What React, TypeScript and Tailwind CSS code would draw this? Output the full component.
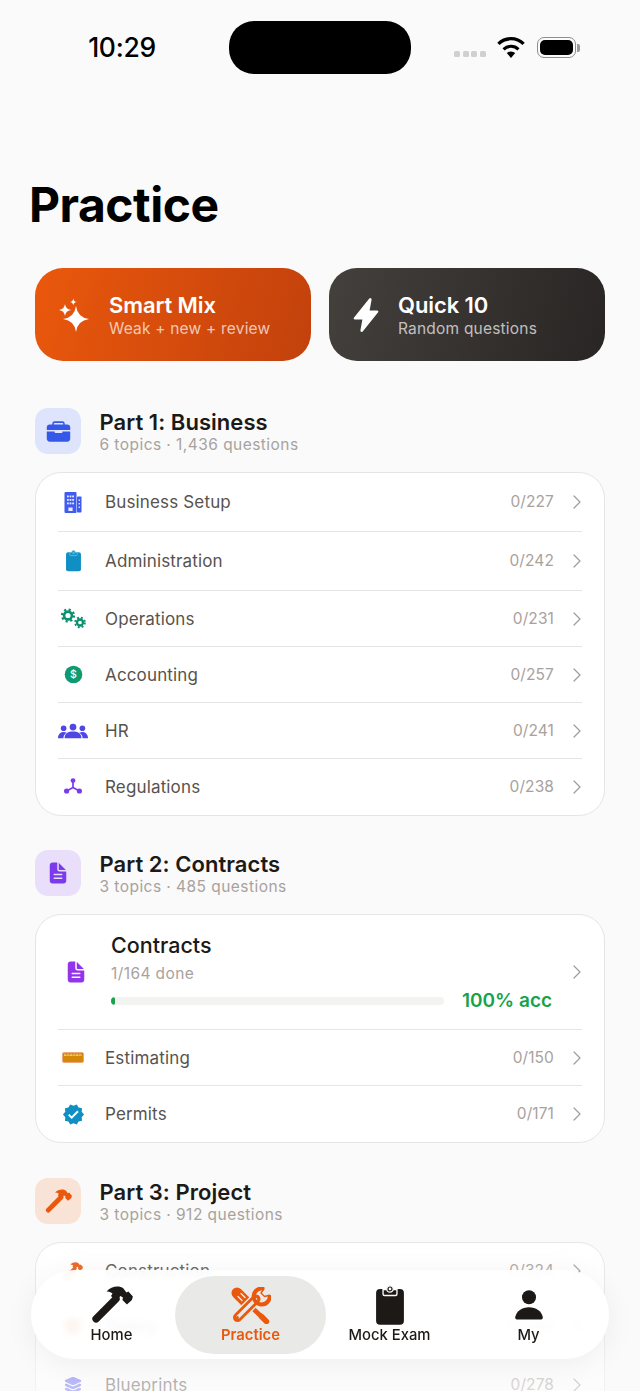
import type { ReactNode } from "react";
import { ChevronRight } from "lucide-react";
import { IoFlash, IoBriefcase, IoDocumentText, IoLayers, IoShield } from "react-icons/io5";
import { MdVerified } from "react-icons/md";

function Hammer({ size, color }: { size: number; color: string }) {
  return (
    <svg width={size} height={size * 0.9} viewBox="0 0 42 38" fill={color}>
      <path d="M5 33L25 13" stroke={color} strokeWidth="7.5" strokeLinecap="round" />
      <path d="M15.5 5.5C20 0.5 28 -1 32.5 2.5L35.5 6.5L37.5 5.5L42 10.5L41 14L36 18.5L31.5 14L32 11.5L29.5 10L25 15L20 10L21.5 7.5C19.5 6 17.5 5.5 15.5 5.5Z" />
    </svg>
  );
}

function Clipboard({ width, color, clip }: { width: number; color: string; clip: string }) {
  return (
    <svg width={width} height={width * 1.42} viewBox="0 0 28 40">
      <rect x="0" y="4" width="28" height="36" rx="4" fill={color} />
      <path d="M7 4.5h14V9a1.5 1.5 0 0 1-1.5 1.5h-11A1.5 1.5 0 0 1 7 9z" fill={color} stroke={clip} strokeWidth="1.4" />
      <circle cx="14" cy="4" r="3.2" fill={color} stroke={clip} strokeWidth="1.2" />
      <circle cx="14" cy="4" r="1.4" fill={clip} />
    </svg>
  );
}

function Building() {
  return (
    <svg width="18" height="21" viewBox="0 0 18 21">
      <rect x="0.5" y="0" width="12" height="21" rx="1" fill="#3f5bf0" />
      <rect x="13" y="4.5" width="4.5" height="16" rx="0.8" fill="#3f5bf0" />
      <g fill="#e6eaff">
        <rect x="3" y="3.5" width="1.8" height="1.8" />
        <rect x="5.6" y="3.5" width="1.8" height="1.8" />
        <rect x="8.2" y="3.5" width="1.8" height="1.8" />
        <rect x="3" y="7" width="1.8" height="1.8" />
        <rect x="5.6" y="7" width="1.8" height="1.8" />
        <rect x="8.2" y="7" width="1.8" height="1.8" />
        <rect x="3" y="10.5" width="1.8" height="1.8" />
        <rect x="5.6" y="10.5" width="1.8" height="1.8" />
        <rect x="8.2" y="10.5" width="1.8" height="1.8" />
        <rect x="4.4" y="15.5" width="4.2" height="3.5" />
        <rect x="14.6" y="7.5" width="1.4" height="1.4" />
        <rect x="14.6" y="11" width="1.4" height="1.4" />
        <rect x="14.6" y="14.5" width="1.4" height="1.4" />
      </g>
    </svg>
  );
}

const gearsIcon = (
  <svg width="25" height="21" viewBox="0 0 25 21" fill="none" stroke="#0b8f6f">
    <circle cx="7" cy="7.5" r="3.9" strokeWidth="2.6" />
    <circle cx="7" cy="7.5" r="6" strokeWidth="2.2" strokeDasharray="2.2 2.5" />
    <circle cx="19" cy="14.5" r="3" strokeWidth="2.3" />
    <circle cx="19" cy="14.5" r="4.9" strokeWidth="1.9" strokeDasharray="1.9 2" />
  </svg>
);

const dollarIcon = (
  <svg width="19" height="19" viewBox="0 0 19 19">
    <circle cx="9.5" cy="9.5" r="8.8" fill="#0f9a72" />
    <text x="9.5" y="13.3" textAnchor="middle" fontSize="10.5" fontWeight="500" fill="#fff" fontFamily="Inter, sans-serif">
      $
    </text>
  </svg>
);

const groupIcon = (
  <svg width="32" height="16" viewBox="0 0 32 16" fill="#4f46e5">
    <circle cx="6" cy="5" r="3" />
    <circle cx="16" cy="3.8" r="3.6" />
    <circle cx="26" cy="5" r="3" />
    <path d="M7 15.8C7 10.5 11 8.6 16 8.6S25 10.5 25 15.8Z" />
    <path d="M0 15.8C0 11 3 9 6.5 9L9.5 9.8C7 11.2 5.8 13 5.8 15.8Z" />
    <path d="M32 15.8C32 11 29 9 25.5 9L22.5 9.8C25 11.2 26.2 13 26.2 15.8Z" />
  </svg>
);

const networkIcon = (
  <svg width="20" height="20" viewBox="0 0 20 20" fill="#7c3aed">
    <path d="M10 4v6.5M10 10.5l-6 3.2M10 10.5l6 3.2" stroke="#7c3aed" strokeWidth="1.7" fill="none" />
    <circle cx="10" cy="3.6" r="2.4" />
    <circle cx="3.6" cy="14" r="2.6" />
    <circle cx="16.4" cy="14" r="2.6" />
  </svg>
);

const rulerIcon = (
  <svg width="22" height="11" viewBox="0 0 22 11">
    <rect x="0.5" y="0.5" width="21" height="10" rx="1.5" fill="#d48806" stroke="#eda77c" />
    <path d="M3 1.5v2.5M6 1.5v1.6M9 1.5v2.5M12 1.5v1.6M15 1.5v2.5M18 1.5v1.6" stroke="#fde3c4" strokeWidth="0.8" />
    <path d="M2 3.4h18" stroke="#fde3c4" strokeWidth="0.5" />
  </svg>
);

const sparkles = (
  <svg width="32" height="37" viewBox="0 0 32 37" fill="#fff">
    <path d="M18 10Q19.5 21.5 31 23Q19.5 24.5 18 36Q16.5 24.5 5 23Q16.5 21.5 18 10Z" />
    <path d="M7 8Q7.7 13.3 13 14Q7.7 14.7 7 20Q6.3 14.7 1 14Q6.3 13.3 7 8Z" />
    <path d="M15.3 2.5Q15.7 5.6 18.8 6Q15.7 6.4 15.3 9.5Q14.9 6.4 11.8 6Q14.9 5.6 15.3 2.5Z" />
  </svg>
);

const toolsIcon = (
  <svg width="40" height="37" viewBox="0 0 40 37" fill="none" strokeLinecap="round">
    <path d="M6 6L15 15" stroke="#ea580c" strokeWidth="11" />
    <path d="M7 9.5L11 13.5M10 6.5L14 10.5" stroke="#e9e9e8" strokeWidth="1.4" />
    <path d="M15 15L33 32" stroke="#ea580c" strokeWidth="4.5" strokeLinecap="butt" />
    <path d="M30.5 29.5L35.5 34.5" stroke="#ea580c" strokeWidth="5.5" />
    <path d="M6.5 30.5L25 12" stroke="#e9e9e8" strokeWidth="12" />
    <path d="M6.5 30.5L25 12" stroke="#ea580c" strokeWidth="9" />
    <path d="M7 30L24.5 12.5" stroke="#e9e9e8" strokeWidth="3.6" />
    <circle cx="6.5" cy="30.5" r="1.5" fill="#ea580c" />
    <path d="M33 1.8A8 8 0 1 0 38.6 8.2" stroke="#ea580c" strokeWidth="4" strokeLinecap="butt" />
    <path d="M33 1.8L30 6L33.5 9.5L38.6 8.2" stroke="#ea580c" strokeWidth="1.4" />
  </svg>
);

const personIcon = (
  <svg width="28" height="30" viewBox="0 0 28 30" fill="#1c1917">
    <circle cx="14" cy="7.2" r="7" />
    <path d="M0.2 27C1.5 21 7 17.2 14 17.2S26.5 21 27.8 27C28.1 28.5 27 29.5 25.5 29.5H2.5C1 29.5 -0.1 28.5 0.2 27Z" />
  </svg>
);

type Row = { icon: ReactNode; label: string; count: string };

const business: Row[] = [
  { icon: <Building />, label: "Business Setup", count: "0/227" },
  { icon: <Clipboard width={15} color="#0f8fc4" clip="#7cc3df" />, label: "Administration", count: "0/242" },
  { icon: gearsIcon, label: "Operations", count: "0/231" },
  { icon: dollarIcon, label: "Accounting", count: "0/257" },
  { icon: groupIcon, label: "HR", count: "0/241" },
  { icon: networkIcon, label: "Regulations", count: "0/238" },
];

function TopicRow({ row, last, height }: { row: Row; last?: boolean; height: string }) {
  return (
    <div className={`mx-[22px] flex items-center ${height} ${last ? "" : "border-b border-[#e7e5e4]"}`}>
      <div className="flex w-[30px] shrink-0 justify-center">{row.icon}</div>
      <span className="mt-[2px] ml-[17px] flex-1 text-[17px] tracking-[0.15px] text-[#57534e]">{row.label}</span>
      <span className="text-[15.5px] tracking-[0.1px] text-[#a8a29e]">{row.count}</span>
      <ChevronRight size={24} strokeWidth={1.2} className="mr-[-7px] ml-[11px] text-[#a09b96]" />
    </div>
  );
}

function SectionHead({ tint, icon, title, sub }: { tint: string; icon: ReactNode; title: string; sub: string }) {
  return (
    <div className="flex items-center">
      <div className={`flex h-[46px] w-[46px] items-center justify-center rounded-[13px] ${tint}`}>{icon}</div>
      <div className="ml-[18.5px]">
        <div className="text-[22px] leading-[28px] font-semibold tracking-[0.05px] text-[#1c1917]">{title}</div>
        <div className="text-[15.5px] leading-[18px] tracking-[0.45px] text-[#a8a29e]">{sub}</div>
      </div>
    </div>
  );
}

function NavItem({ icon, label, active }: { icon: ReactNode; label: string; active?: boolean }) {
  return (
    <div
      className={`flex flex-col items-center justify-end pb-[10px] ${
        active ? "mx-[-6px] rounded-[39px] bg-[#e9e9e8]" : ""
      }`}
    >
      <div className="flex h-[40px] items-center justify-center">{icon}</div>
      <span className={`mt-[1px] text-[14.8px] leading-[18px] ${active ? "font-semibold text-[#ea580c]" : "font-medium text-[#1c1917]"}`}>
        {label}
      </span>
    </div>
  );
}

export default function App() {
  return (
    <div className="relative h-[1391px] w-[640px] overflow-hidden bg-[#fafafa] font-['Inter',sans-serif]">
      {/* status bar */}
      <div className="grid grid-cols-[229px_182px_1fr] pt-[21px]">
        <div className="flex items-center justify-center pl-[15px] text-[26.5px] font-medium tracking-[-0.3px] text-black">10:29</div>
        <div className="h-[53px] rounded-[25px] bg-black" />
        <div className="flex items-center pl-[43px]">
          <div className="mt-[13px] flex gap-[2.5px]">
            <span className="h-[6px] w-[6px] rounded-[1.5px] bg-[#d0d0d0]" />
            <span className="h-[6px] w-[6px] rounded-[1.5px] bg-[#d0d0d0]" />
            <span className="h-[6px] w-[6px] rounded-[1.5px] bg-[#d0d0d0]" />
            <span className="h-[6px] w-[6px] rounded-[1.5px] bg-[#d0d0d0]" />
          </div>
          <svg width="28" height="21" viewBox="0 0 24 18" className="ml-[11px]">
            <path d="M12 18l-3.6-4.3a5.4 5.4 0 0 1 7.2 0z" fill="#000" />
            <path d="M5.6 10.6a9.2 9.2 0 0 1 12.8 0" stroke="#000" strokeWidth="2.6" fill="none" />
            <path d="M1.2 5.9a15.4 15.4 0 0 1 21.6 0" stroke="#000" strokeWidth="2.8" fill="none" />
          </svg>
          <div className="ml-[12px] flex items-center">
            <div className="flex h-[21px] w-[39px] items-center justify-center rounded-[7px] border border-[#8e8e8e] p-[2px]">
              <div className="h-full w-full rounded-[5px] bg-black" />
            </div>
            <div className="ml-[1px] h-[8px] w-[3px] rounded-r-[2px] bg-[#9a9a9a]" />
          </div>
        </div>
      </div>

      {/* title */}
      <h1 className="mt-[103px] ml-[29px] text-[48px] leading-[56px] font-bold tracking-[-0.5px] text-black">Practice</h1>

      {/* quick actions */}
      <div className="mx-[35px] mt-[35px] grid grid-cols-2 gap-[18px]">
        <div className="flex h-[93px] items-center rounded-[28px] bg-[linear-gradient(105deg,#ea580c,#c2410c)] pl-[23px]">
          {sparkles}
          <div className="ml-[19px]">
            <div className="text-[22px] leading-[26px] font-semibold tracking-[-0.1px] text-white">Smart Mix</div>
            <div className="mt-[1px] text-[15.5px] leading-[19px] tracking-[0.2px] text-white/70">Weak + new + review</div>
          </div>
        </div>
        <div className="flex h-[93px] items-center rounded-[28px] bg-[linear-gradient(105deg,#44403c,#292524)] pl-[19px]">
          <IoFlash size={36} color="#fff" />
          <div className="ml-[14px]">
            <div className="text-[22px] leading-[26px] font-semibold tracking-[-0.1px] text-white">Quick 10</div>
            <div className="mt-[1px] text-[15.5px] leading-[19px] tracking-[0.2px] text-white/70">Random questions</div>
          </div>
        </div>
      </div>

      <div className="mx-[35px] mt-[47px]">
        {/* part 1 */}
        <SectionHead
          tint="bg-[#dde4fb]"
          icon={<IoBriefcase size={25} color="#3558e8" />}
          title="Part 1: Business"
          sub="6 topics · 1,436 questions"
        />
        <div className="mt-[18px] rounded-[26px] border border-[#e7e5e4] bg-white">
          {business.map((row, i) => (
            <TopicRow
              key={row.label}
              row={row}
              last={i === business.length - 1}
              height={i < 2 ? "h-[59px]" : "h-[56px]"}
            />
          ))}
        </div>

        {/* part 2 */}
        <div className="mt-[34px]">
          <SectionHead
            tint="bg-[#e9dffb]"
            icon={<IoDocumentText size={24} color="#7c3aed" />}
            title="Part 2: Contracts"
            sub="3 topics · 485 questions"
          />
        </div>
        <div className="mt-[18px] rounded-[26px] border border-[#e7e5e4] bg-white">
          <div className="mx-[22px] flex h-[115px] items-center border-b border-[#e7e5e4]">
            <div className="flex w-[36px] shrink-0 justify-center">
              <IoDocumentText size={24} color="#9333ea" />
            </div>
            <div className="ml-[17px] flex-1">
              <div className="text-[21.5px] leading-[26px] font-medium text-[#1c1917]">Contracts</div>
              <div className="mt-[6px] text-[15.5px] leading-[20px] tracking-[0.4px] text-[#a8a29e]">1/164 done</div>
              <div className="mt-[6px] flex items-center">
                <div className="h-[8px] w-[333px] overflow-hidden rounded-full bg-[#f3f3f2]">
                  <div className="h-full w-[4px] rounded-full bg-[#16a34a]" />
                </div>
                <span className="ml-[18px] text-[19px] leading-[22px] font-semibold text-[#16a34a]">100% acc</span>
              </div>
            </div>
            <ChevronRight size={24} strokeWidth={1.2} className="mr-[-7px] text-[#a09b96]" />
          </div>
          <TopicRow row={{ icon: rulerIcon, label: "Estimating", count: "0/150" }} height="h-[56px]" />
          <TopicRow row={{ icon: <MdVerified size={23} color="#0f8fc4" />, label: "Permits", count: "0/171" }} last height="h-[56px]" />
        </div>

        {/* part 3 */}
        <div className="mt-[35px]">
          <SectionHead
            tint="bg-[#f9e2d6]"
            icon={<Hammer size={27} color="#ea580c" />}
            title="Part 3: Project"
            sub="3 topics · 912 questions"
          />
        </div>
        <div className="mt-[18px] rounded-[26px] border border-[#e7e5e4] bg-white">
          <TopicRow row={{ icon: <Hammer size={20} color="#ea580c" />, label: "Construction", count: "0/324" }} height="h-[56px]" />
          <TopicRow row={{ icon: <IoShield size={20} color="#ea580c" />, label: "Safety", count: "0/350" }} height="h-[57px]" />
          <TopicRow row={{ icon: <IoLayers size={20} color="#6366f1" />, label: "Blueprints", count: "0/278" }} last height="h-[57px]" />
        </div>
      </div>

      {/* bottom fade */}
      <div className="absolute inset-x-0 bottom-0 h-[160px] bg-gradient-to-b from-[#fafafa]/0 to-[#fafafa]/60" />

      {/* tab bar */}
      <div className="absolute top-[1270px] left-[31px] grid h-[89px] w-[578px] grid-cols-4 rounded-[44px] bg-white/90 px-[11px] pt-[6px] pb-[5px] shadow-[0_6px_30px_rgba(0,0,0,0.06)] backdrop-blur-[3px]">
        <NavItem icon={<Hammer size={42} color="#1c1917" />} label="Home" />
        <NavItem icon={toolsIcon} label="Practice" active />
        <NavItem icon={<Clipboard width={28} color="#1c1917" clip="#fafafa" />} label="Mock Exam" />
        <NavItem icon={personIcon} label="My" />
      </div>
    </div>
  );
}
